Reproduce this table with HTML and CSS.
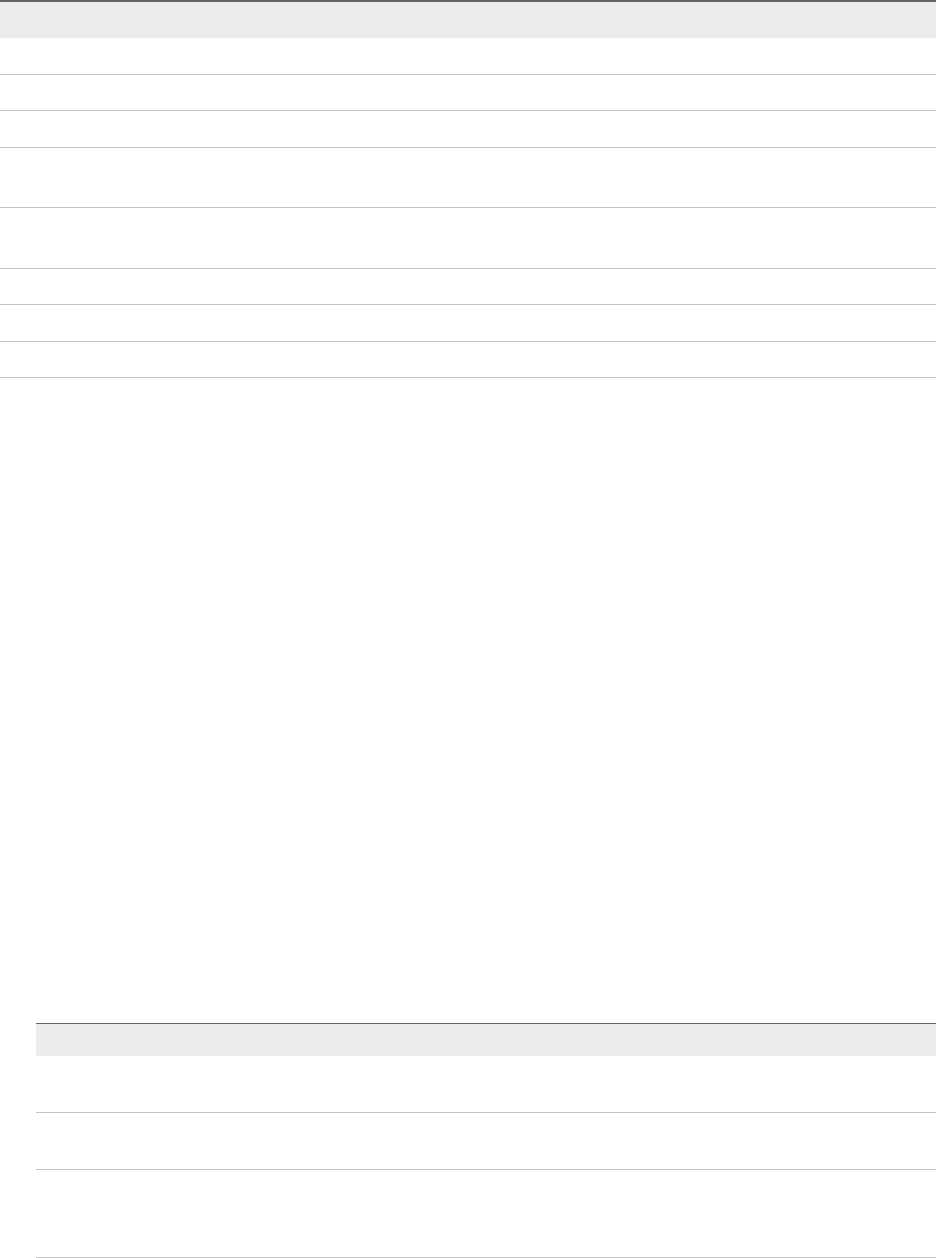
FILE: index.html
```html
<!DOCTYPE html>
<html lang="en">
<head>
  <meta charset="UTF-8">
  <meta name="viewport" content="width=device-width, initial-scale=1.0">
  <title>Tables</title>
  <link rel="stylesheet" href="styles.css">
</head>
<body>
  <div class="table table-main">
    <div class="row head"><div class="cell"></div><div class="cell"></div></div>
    <div class="row h36"><div class="cell"></div><div class="cell"></div></div>
    <div class="row h35"><div class="cell"></div><div class="cell"></div></div>
    <div class="row h36"><div class="cell"></div><div class="cell"></div></div>
    <div class="row h59"><div class="cell"></div><div class="cell"></div></div>
    <div class="row h60"><div class="cell"></div><div class="cell"></div></div>
    <div class="row h35"><div class="cell"></div><div class="cell"></div></div>
    <div class="row h36"><div class="cell"></div><div class="cell"></div></div>
    <div class="row h35"><div class="cell"></div><div class="cell"></div></div>
  </div>

  <div class="section">
    <div class="table table-second">
      <div class="row head"><div class="cell"></div></div>
      <div class="row h56"><div class="cell"></div></div>
      <div class="row h56"><div class="cell"></div></div>
      <div class="row h87"><div class="cell"></div></div>
    </div>
  </div>
</body>
</html>
```

FILE: styles.css
```css
body {
  margin: 0;
  font-family: "Liberation Sans", Arial, sans-serif;
  font-size: 14px;
  color: #333;
  background: #fff;
}
.table {
  display: flex;
  flex-direction: column;
}
.row {
  display: grid;
  box-sizing: content-box;
  border-bottom: 1px solid #c4c4c4;
}
.table-main .row {
  grid-template-columns: 230px 1fr;
}
.table-second .row {
  grid-template-columns: 1fr;
}
.row.head {
  background: #ececec;
  border-bottom: none;
}
.table-main .head {
  height: 36px;
  border-top: 2px solid #666;
}
.table-second .head {
  height: 32px;
  border-top: 1px solid #666;
}
.h35 { height: 35px; }
.h36 { height: 36px; }
.h56 { height: 56px; }
.h59 { height: 59px; }
.h60 { height: 60px; }
.h87 { height: 87px; }
.section {
  margin-top: 645px;
  padding-left: 36px;
}
```
